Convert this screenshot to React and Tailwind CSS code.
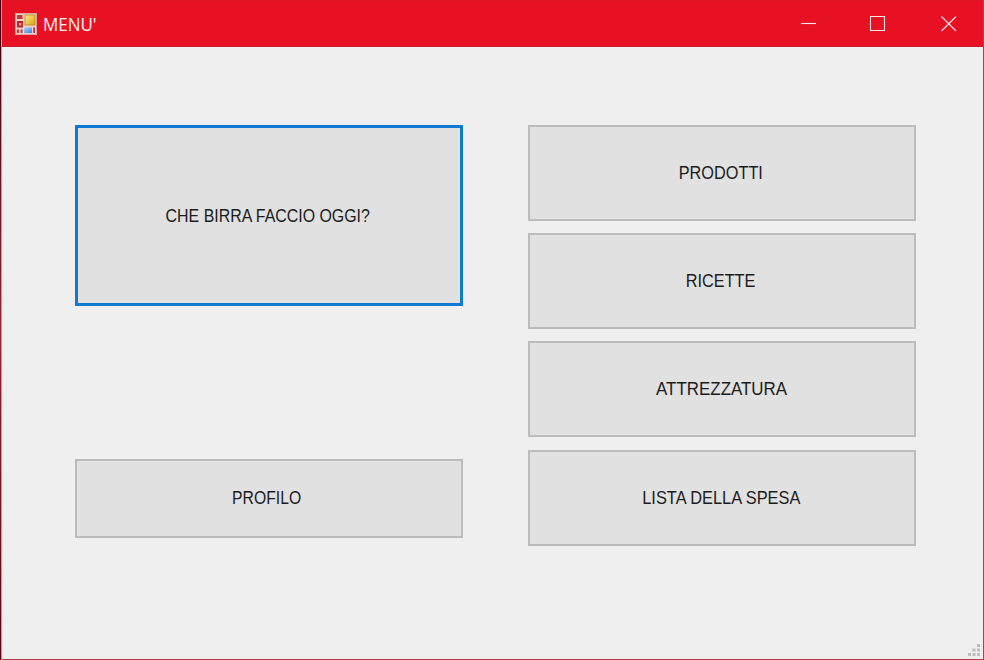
function FormIcon() {
  return (
    <svg width="22" height="22" viewBox="0 0 22 22" className="block">
      <defs>
        <linearGradient id="gold" x1="0" y1="0" x2="1" y2="1">
          <stop offset="0" stopColor="#ffe88c" />
          <stop offset="1" stopColor="#d9a514" />
        </linearGradient>
        <linearGradient id="sky" x1="0" y1="0" x2="1" y2="1">
          <stop offset="0" stopColor="#a9d4ff" />
          <stop offset="1" stopColor="#3c86dc" />
        </linearGradient>
      </defs>
      <rect x="0.5" y="0.5" width="21" height="21" fill="#f2d0c8" stroke="#d9a79c" />
      <rect x="2" y="2" width="5.5" height="4" fill="#c43a3a" />
      <rect x="2" y="8" width="6" height="6.5" fill="#b02a2a" />
      <rect x="4" y="10" width="2.5" height="2.5" fill="#e98f80" />
      <rect x="2" y="16.5" width="2" height="3.5" fill="#c43a3a" />
      <rect x="5.5" y="16.5" width="2" height="3.5" fill="#c43a3a" />
      <rect x="10" y="2" width="10" height="10" fill="url(#gold)" stroke="#b68718" strokeWidth="0.8" />
      <rect x="9" y="14.5" width="8" height="5.5" fill="url(#sky)" />
      <rect x="18.2" y="14.5" width="1.8" height="5.5" fill="#b63a45" />
    </svg>
  );
}

function Label({ children, className }) {
  return (
    <span className={`block whitespace-nowrap text-[18.5px] leading-6 text-[#1c1c1c] ${className}`}>
      {children}
    </span>
  );
}

function MenuButton({ label, size, primary, text }) {
  return (
    <button
      className={`flex shrink-0 items-center justify-center bg-[#e1e1e1] ${
        primary ? "border-[3px] border-[#1079d0]" : "border-2 border-[#bcbcbc]"
      } ${size}`}
    >
      <Label className={text}>{label}</Label>
    </button>
  );
}

export default function App() {
  return (
    <div className="flex h-[660px] w-[984px] overflow-hidden bg-[#efefef] font-['Liberation_Sans',Arial,sans-serif]">
      <div className="w-px shrink-0 bg-linear-to-b from-[#40000c] via-[#962632] to-[#65000e]" />
      <div className="w-px shrink-0 bg-[#dc8f98]" />
      <div className="flex min-w-0 grow flex-col border-r border-b border-[#b83b50]">
        <header className="flex h-[47px] shrink-0 items-center border-t border-b border-t-[#df1628] border-b-[#c91c2f] bg-[#e81123] pl-[13px]">
          <FormIcon />
          <span className="ml-[6px] mt-px origin-left scale-x-[0.97] font-['Open_Sans','Noto_Sans',sans-serif] text-[17.5px] leading-6 text-[#fff0f0]">
            MENU'
          </span>
          <div className="ml-auto flex pr-[26px]">
            <svg width="156" height="16" viewBox="0 0 156 16" fill="none" stroke="#ffe5e8" strokeWidth="1.1">
              <path d="M0 7.5H15" />
              <path d="M69.5 0.5H83.5V14.5H69.5Z" />
              <path d="M140.5 0.5L155 15M155 0.5L140.5 15" />
            </svg>
          </div>
        </header>
        <main className="flex grow pt-[78px] pl-[73px]">
          <div className="flex w-[388px] flex-col">
            <MenuButton primary label="CHE BIRRA FACCIO OGGI?" size="h-[181px] w-[388px]" text="-translate-x-[1px] scale-x-[0.86]" />
            <div className="h-[153px] shrink-0" />
            <MenuButton label="PROFILO" size="h-[79px] w-[388px]" text="-translate-x-[2px] -translate-y-[1px] scale-x-[0.85]" />
          </div>
          <div className="ml-[65px] flex w-[388px] flex-col">
            <MenuButton label="PRODOTTI" size="h-[96px] w-[388px]" text="-translate-x-[1px] scale-x-[0.88]" />
            <MenuButton label="RICETTE" size="mt-3 h-[96px] w-[388px]" text="-translate-x-[1px] scale-x-[0.88]" />
            <MenuButton label="ATTREZZATURA" size="mt-3 h-[96px] w-[388px]" text="scale-x-[0.915]" />
            <MenuButton label="LISTA DELLA SPESA" size="mt-[13px] h-[96px] w-[388px]" text="-translate-x-[1px] scale-x-[0.885]" />
          </div>
          <svg width="12" height="12" viewBox="0 0 12 12" fill="#bdbdbd" className="mr-[3px] mb-[3px] ml-auto self-end">
            <path d="M9 0h3v3h-3zM4.5 4.5h3v3h-3zM9 4.5h3v3h-3zM0 9h3v3h-3zM4.5 9h3v3h-3zM9 9h3v3h-3z" />
          </svg>
        </main>
      </div>
    </div>
  );
}
